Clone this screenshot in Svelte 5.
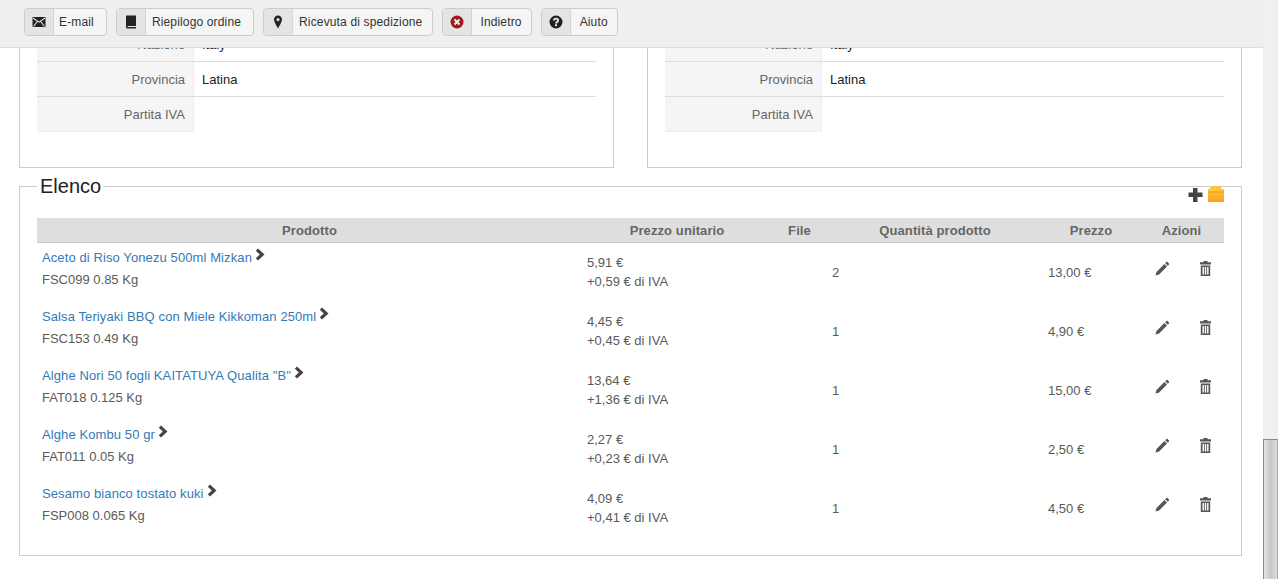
<script lang="ts">
  const actions = [
    { label: 'E-mail', icon: 'mail', padLeft: 5, padRight: 12 },
    { label: 'Riepilogo ordine', icon: 'book', padLeft: 6, padRight: 12 },
    { label: 'Ricevuta di spedizione', icon: 'marker', padLeft: 6, padRight: 10 },
    { label: 'Indietro', icon: 'remove', padLeft: 8, padRight: 9 },
    { label: 'Aiuto', icon: 'help', padLeft: 9, padRight: 9 },
  ];

  const details = [
    { label: 'Nazione', value: 'Italy' },
    { label: 'Provincia', value: 'Latina' },
    { label: 'Partita IVA', value: '' },
  ];

  const items = [
    { name: 'Aceto di Riso Yonezu 500ml Mizkan', code: 'FSC099 0.85 Kg', unit: '5,91 €', tax: '+0,59 € di IVA', qty: 2, price: '13,00 €' },
    { name: 'Salsa Teriyaki BBQ con Miele Kikkoman 250ml', code: 'FSC153 0.49 Kg', unit: '4,45 €', tax: '+0,45 € di IVA', qty: 1, price: '4,90 €' },
    { name: 'Alghe Nori 50 fogli KAITATUYA Qualita "B"', code: 'FAT018 0.125 Kg', unit: '13,64 €', tax: '+1,36 € di IVA', qty: 1, price: '15,00 €' },
    { name: 'Alghe Kombu 50 gr', code: 'FAT011 0.05 Kg', unit: '2,27 €', tax: '+0,23 € di IVA', qty: 1, price: '2,50 €' },
    { name: 'Sesamo bianco tostato kuki', code: 'FSP008 0.065 Kg', unit: '4,09 €', tax: '+0,41 € di IVA', qty: 1, price: '4,50 €' },
  ];
</script>

{#snippet detailBox()}
  <section class="box">
    {#each details as row}
      <div class="detail-row">
        <div class="detail-label">{row.label}</div>
        <div class="detail-value">{row.value}</div>
      </div>
    {/each}
  </section>
{/snippet}

<div class="page">
  <div class="viewport">
    <header class="toolbar">
      {#each actions as action}
        <button class="action" type="button">
          <span class="action-icon">
            {#if action.icon === 'mail'}
              <svg width="14" height="14" viewBox="0 0 14 14"><rect x="0.500" y="2" width="13" height="10" fill="#222"/><path fill="none" stroke="#e4e4e4" stroke-width="1.100" d="M1 3l6 4.200L13 3M1.500 11.500l3.800-5M12.500 11.500l-3.800-5"/></svg>
            {:else if action.icon === 'book'}
              <svg width="14" height="14" viewBox="0 0 14 14"><path fill="#222" d="M3 0.500h9v10.500H4.500C3.700 11 3.300 11.400 3.500 12H12v1.500H3.500C2.500 13.500 2 12.900 2 12V1.500c0-.6.400-1 1-1z"/></svg>
            {:else if action.icon === 'marker'}
              <svg width="14" height="14" viewBox="0 0 14 14"><path fill="#222" fill-rule="evenodd" d="M7 0.500c2.400 0 4 1.700 4 4 0 2.700-2.600 6-4 9-1.400-3-4-6.300-4-9 0-2.300 1.600-4 4-4zM7 3a1.600 1.600 0 1 0 0 3.200A1.600 1.600 0 0 0 7 3z"/></svg>
            {:else if action.icon === 'remove'}
              <svg width="14" height="14" viewBox="0 0 14 14"><circle cx="7" cy="7" r="6.500" fill="#a11a1a"/><path stroke="#eee" stroke-width="2" d="M4.500 4.500l5 5M9.500 4.500l-5 5"/></svg>
            {:else}
              <svg width="14" height="14" viewBox="0 0 14 14"><circle cx="7" cy="7" r="6.500" fill="#222"/><path fill="none" stroke="#eee" stroke-width="1.800" d="M4.900 5.500C5 4.300 5.900 3.700 7 3.700c1.200 0 2.100.7 2.100 1.700 0 1.500-2.100 1.500-2.100 3"/><rect x="6" y="9.300" width="2" height="1.800" fill="#eee"/></svg>
            {/if}
          </span>
          <span class="action-label" style:padding-left="{action.padLeft}px" style:padding-right="{action.padRight}px">{action.label}</span>
        </button>
      {/each}
    </header>

    <main class="content">
      <div class="boxes">
        {@render detailBox()}
        {@render detailBox()}
      </div>

      <fieldset class="list">
        <legend>Elenco</legend>
        <div class="list-tools">
          <svg width="15" height="15" viewBox="0 0 15 15"><path fill="#444" d="M5 1h4.500v4.500H14.500V10H9.500v5H5v-5H0.500V5.500H5z"/></svg>
          <svg class="folder" width="16" height="16" viewBox="0 0.500 16 16">
            <defs>
              <linearGradient id="folder-fill" x1="0" y1="0" x2="0" y2="1">
                <stop offset="0" stop-color="#ffc94d"/>
                <stop offset="0.5" stop-color="#fdb52c"/>
                <stop offset="1" stop-color="#f9a50f"/>
              </linearGradient>
            </defs>
            <path fill="#fcc244" d="M1 3.500L4 0.500h9v3z"/>
            <rect x="0" y="3.500" width="16" height="13" fill="url(#folder-fill)"/>
            <rect x="0" y="6" width="16" height="1" fill="#e89a10"/>
          </svg>
        </div>

        <table>
          <colgroup>
            <col style="width: 545px" />
            <col style="width: 190px" />
            <col style="width: 55px" />
            <col style="width: 216px" />
            <col style="width: 96px" />
            <col style="width: 85px" />
          </colgroup>
          <thead>
            <tr>
              <th>Prodotto</th>
              <th>Prezzo unitario</th>
              <th>File</th>
              <th>Quantità prodotto</th>
              <th>Prezzo</th>
              <th>Azioni</th>
            </tr>
          </thead>
          <tbody>
            {#each items as item}
              <tr>
                <td>
                  <div class="product">
                    <div class="product-name">
                      <a href="#top">{item.name}</a>
                      <svg class="chevron" width="11" height="13" viewBox="0 0 11 13"><path fill="#444" d="M3 0.500L9.500 6.500 3 12.500 0.800 10.300 4.800 6.500 0.800 2.700z"/></svg>
                    </div>
                    <div class="product-code">{item.code}</div>
                  </div>
                </td>
                <td>
                  <div class="unit-cell">
                    <div class="unit">{item.unit}</div>
                    <div class="unit">{item.tax}</div>
                  </div>
                </td>
                <td></td>
                <td>{item.qty}</td>
                <td>{item.price}</td>
                <td>
                  <div class="row-actions">
                    <svg width="14" height="15" viewBox="0 0 14 15"><path fill="#555" d="M0.500 14.500l1-3.600L9.400 3l2.600 2.600-7.900 7.900zM10.200 2.200L11.500 0.900c.3-.3.700-.3 1 0l1.600 1.600c.3.300.3.700 0 1L12.800 4.800z"/></svg>
                    <svg width="11" height="15" viewBox="0 0 11 15"><path fill="#555" fill-rule="evenodd" d="M3.500 0h4v1.300h3.500v2.200H0V1.300h3.500zM0.800 4.500h9.400V15H0.800zM2.500 6v7.500h1.400V6zM4.800 6v7.500h1.400V6zM7.100 6v7.500h1.400V6z"/></svg>
                  </div>
                </td>
              </tr>
            {/each}
          </tbody>
        </table>
      </fieldset>
    </main>
  </div>

  <aside class="scrollbar">
    <div class="scroll-thumb"></div>
  </aside>
</div>

<style>
  :global(body) {
    background: #fff;
    color: #5a5a5a;
    font-family: "Liberation Sans", Arial, sans-serif;
    font-size: 13px;
  }

  .page {
    display: flex;
    height: 579px;
    overflow: hidden;
  }

  .viewport {
    flex: 1;
    min-width: 0;
    position: relative;
  }

  .toolbar {
    position: absolute;
    inset: 0 0 auto 0;
    height: 48px;
    box-sizing: border-box;
    display: flex;
    gap: 9px;
    padding: 8px 24px 0;
    background: #efefef;
    border-bottom: 1px solid #ddd;
  }

  .action {
    display: flex;
    align-items: stretch;
    height: 28px;
    padding: 0;
    background: #f5f5f5;
    border: 1px solid #ccc;
    border-radius: 4px;
    font: inherit;
    font-size: 12px;
    letter-spacing: 0.15px;
    color: #333;
  }

  .action-icon {
    width: 28px;
    display: flex;
    align-items: center;
    justify-content: center;
    background: #e4e4e4;
    border-right: 1px solid #d5d5d5;
    border-radius: 3px 0 0 3px;
  }

  .action-label {
    display: flex;
    align-items: center;
  }

  .content {
    padding: 0 21px 0 19px;
  }

  .boxes {
    display: grid;
    grid-template-columns: 595px 595px;
    gap: 33px;
  }

  .box {
    height: 168px;
    box-sizing: border-box;
    padding: 26px 17px 0;
    border: 1px solid #ccc;
  }

  .detail-row {
    display: flex;
    height: 35px;
    box-sizing: border-box;
    border-bottom: 1px solid #ddd;
    line-height: 36px;
  }

  .detail-row:last-child {
    border-bottom: 0;
  }

  .detail-label {
    width: 157px;
    box-sizing: border-box;
    padding-right: 8px;
    text-align: right;
    background: #f5f5f5;
    color: #666;
    border-right: 1px solid #eee;
  }

  .detail-row:last-child .detail-label {
    border-bottom: 1px solid #eee;
  }

  .detail-value {
    padding-left: 8px;
    color: #222;
  }

  .list {
    position: relative;
    margin: 7px 0 0;
    padding: 20px 17px 17px;
    border: 1px solid #ccc;
    min-width: 0;
  }

  legend {
    margin-left: 0;
    padding: 0 2px 0 3px;
    font-size: 20px;
    color: #222;
  }

  .list-tools {
    position: absolute;
    top: -12px;
    right: 17px;
    display: flex;
    align-items: flex-end;
    gap: 5px;
  }

  table {
    width: 1187px;
    table-layout: fixed;
    border-collapse: collapse;
  }

  th {
    height: 24px;
    padding: 0;
    background: #dedede;
    border-bottom: 1px solid #ccc;
    color: #666;
    font-size: 13px;
    font-weight: bold;
    letter-spacing: 0.1px;
    text-align: center;
  }

  td {
    height: 59px;
    padding: 0 5px;
    vertical-align: middle;
  }

  a {
    color: #337ab7;
    letter-spacing: 0.1px;
    text-decoration: none;
  }

  .product {
    padding-bottom: 8px;
  }

  .product-name {
    display: flex;
    align-items: flex-start;
    gap: 3px;
    line-height: 22px;
  }

  .chevron {
    margin-top: 1px;
  }

  .product-code {
    line-height: 22px;
  }

  .unit-cell {
    padding-bottom: 2px;
  }

  .unit {
    line-height: 19px;
  }

  .row-actions {
    display: flex;
    align-items: center;
    justify-content: space-between;
    padding: 0 8px 8px 11px;
  }

  .scrollbar {
    width: 15px;
    flex: none;
    background: #f0f0f0;
    padding-top: 439px;
  }

  .scroll-thumb {
    height: 140px;
    box-sizing: border-box;
    border: 1px solid #888;
    border-right-color: #aaa;
    border-bottom: 0;
    background: linear-gradient(90deg, #e4e4e4, #c8c8c8 50%, #dcdcdc);
  }
</style>
